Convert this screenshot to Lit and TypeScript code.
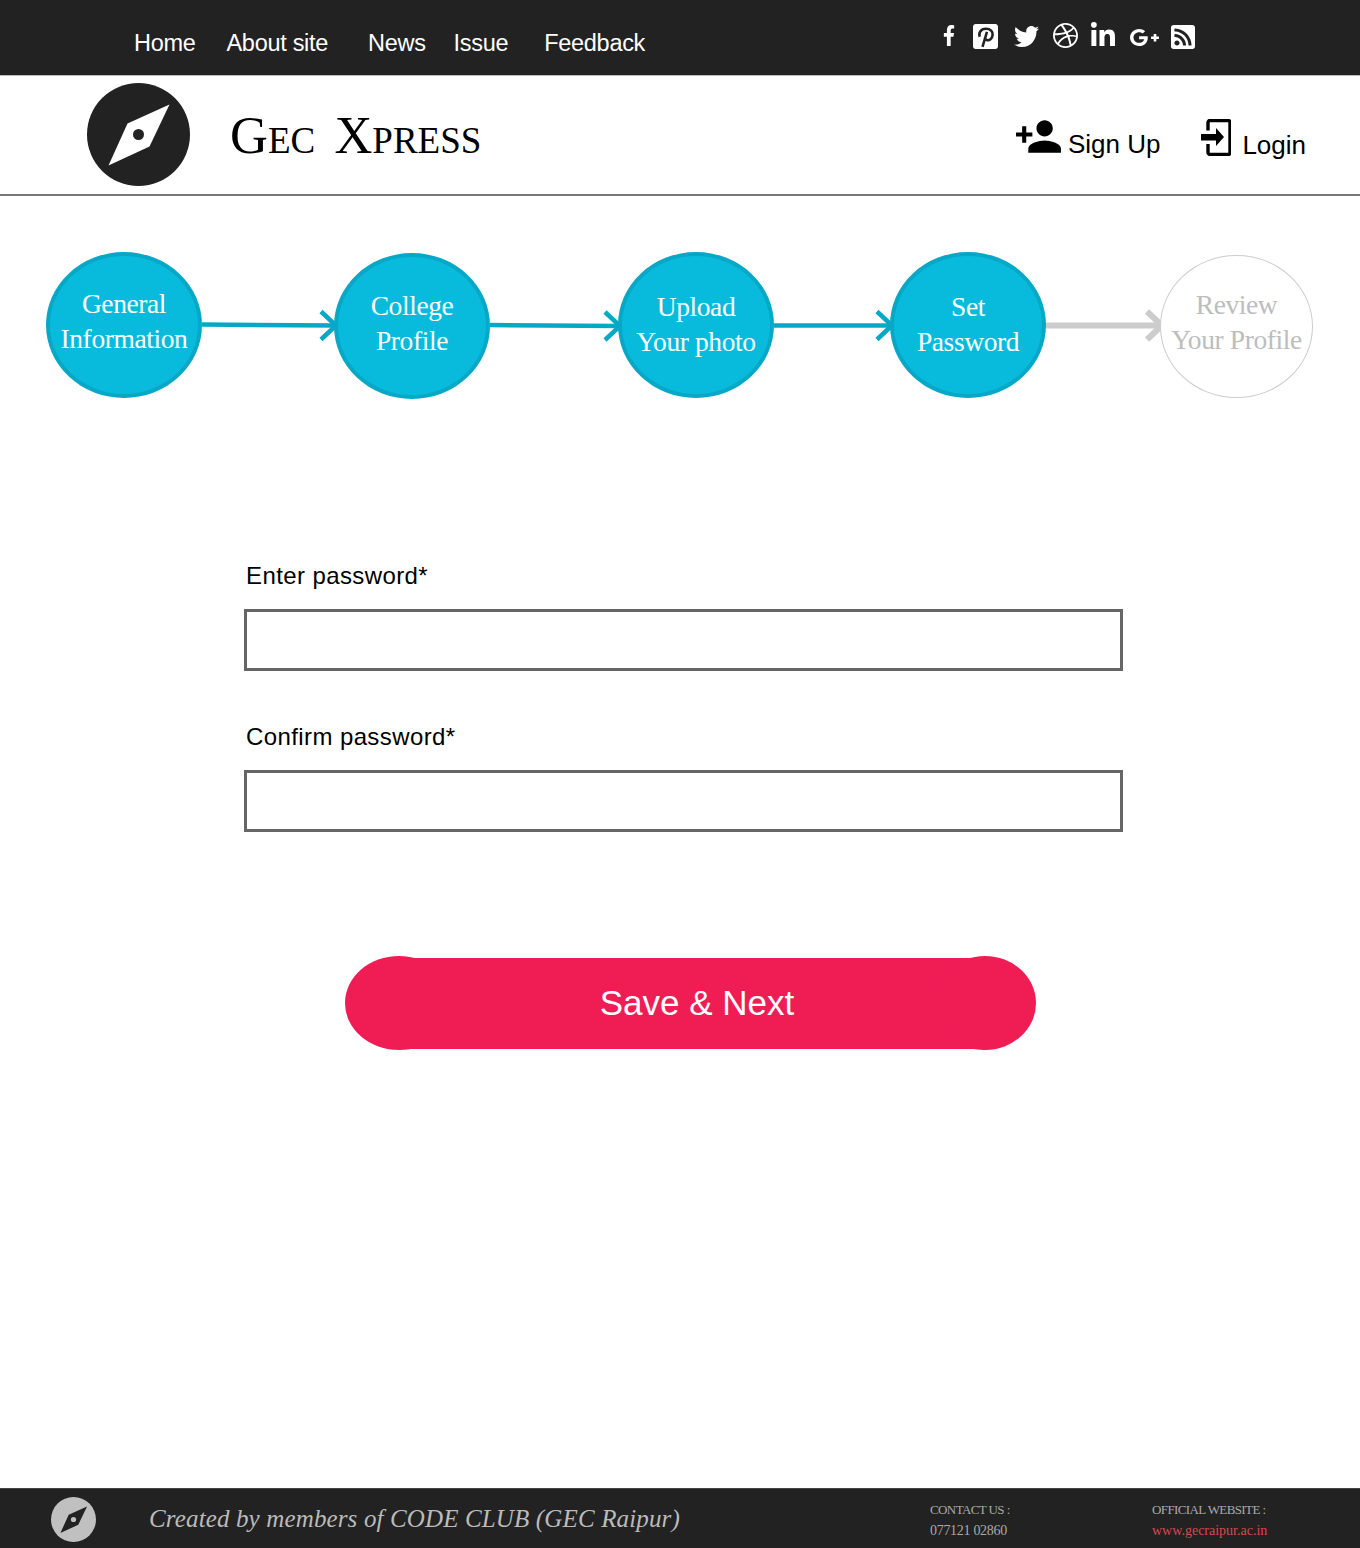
import { LitElement, html, css, svg } from "lit";
import { customElement } from "lit/decorators.js";

type Social = { c: string; vb: string; d: string; inner?: string };

const SOCIAL: Social[] = [
  { c: "f", vb: "0 0 320 512", d: "M279.14 288l14.22-92.66h-88.91v-60.13c0-25.35 12.42-50.06 52.24-50.06h40.42V6.26S260.43 0 225.36 0c-73.22 0-121.08 44.38-121.08 124.72v70.62H22.89V288h81.39v224h100.17V288z" },
  { c: "p", vb: "0 32 448 448", d: "M48 32h352c26.5 0 48 21.5 48 48v352c0 26.5-21.5 48-48 48H48c-26.5 0-48-21.500-48-48V80c0-26.500 21.500-48 48-48z", inner: "M122 262C95 195 135 118 232 118C315 118 358 170 352 228C346 295 292 336 245 318C222 309 212 292 218 270M250 175L170 440" },
  { c: "t", vb: "0 48 512 416", d: "M459.37 151.716c.325 4.548.325 9.097.325 13.645 0 138.72-105.583 298.558-298.558 298.558-59.452 0-114.68-17.219-161.137-47.106 8.447.974 16.568 1.299 25.34 1.299 49.055 0 94.213-16.568 130.274-44.832-46.132-.975-84.792-31.188-98.112-72.772 6.498.974 12.995 1.624 19.818 1.624 9.421 0 18.843-1.3 27.614-3.573-48.081-9.747-84.143-51.98-84.143-102.985v-1.299c13.969 7.797 30.214 12.67 47.431 13.319-28.264-18.843-46.781-51.005-46.781-87.391 0-19.492 5.197-37.36 14.294-52.954 51.655 63.675 129.3 105.258 216.365 109.807-1.624-7.797-2.599-15.918-2.599-24.04 0-57.828 46.782-104.934 104.934-104.934 30.213 0 57.502 12.67 76.67 33.137 23.715-4.548 46.456-13.32 66.599-25.34-7.798 24.366-24.366 44.833-46.132 57.827 21.117-2.273 41.584-8.122 60.426-16.243-14.292 20.791-32.161 39.308-52.628 54.253z" },
  { c: "d", vb: "8 8 496 496", d: "M256 8C119.252 8 8 119.252 8 256s111.252 248 248 248 248-111.252 248-248S392.748 8 256 8zm163.97 114.366c29.503 36.046 47.369 81.957 47.835 131.955-6.984-1.477-77.018-15.682-147.502-6.818-5.752-14.041-11.181-26.393-18.617-41.614 78.321-31.977 113.818-77.482 118.284-83.523zM396.421 97.87c-3.81 5.427-35.697 48.286-111.021 76.519-34.712-63.776-73.185-116.168-79.04-124.008 67.176-16.193 137.966 1.27 190.061 47.489zm-230.48-33.25c5.585 7.659 43.438 60.116 78.537 122.509-99.087 26.313-186.36 25.934-195.834 25.809C62.38 147.205 106.678 92.573 165.941 64.62zM44.17 256.323c0-2.166.043-4.322.108-6.473 9.268.19 111.92 1.513 217.706-30.146 6.064 11.868 11.857 23.915 17.174 35.949-76.599 21.575-146.194 83.527-180.531 142.306C64.794 360.405 44.17 310.73 44.17 256.323zm81.807 167.113c22.127-45.233 82.178-103.622 167.579-132.756 29.74 77.283 42.039 142.053 45.189 160.638-68.112 29.013-150.015 21.053-212.768-27.882zm248.38 8.489c-2.171-12.886-13.446-74.897-41.152-151.033 66.38-10.626 124.7 6.768 131.947 9.055-9.442 58.941-43.273 109.844-90.795 141.978z" },
  { c: "l", vb: "0 0 448 448", d: "M100.28 448H7.4V148.9h92.88zM53.79 108.1C24.09 108.1 0 83.5 0 53.8a53.79 53.79 0 0 1 107.58 0c0 29.7-24.1 54.3-53.79 54.3zM447.9 448h-92.68V302.4c0-34.7-.7-79.2-48.29-79.2-48.29 0-55.69 37.7-55.69 76.7V448h-92.78V148.9h89.08v40.8h1.3c12.4-23.5 42.69-48.3 87.88-48.3 94 0 111.28 61.9 111.28 142.3V448z" },
  { c: "g", vb: "12 64 616 384", d: "M386.061 228.496c1.834 9.692 3.143 19.384 3.143 31.956C389.204 370.205 315.599 448 204.8 448c-106.084 0-192-85.915-192-192s85.916-192 192-192c51.864 0 95.083 18.859 128.611 50.292l-52.126 50.03c-14.145-13.621-39.028-29.599-76.485-29.599-65.484 0-118.92 54.221-118.92 121.277 0 67.056 53.436 121.277 118.92 121.277 75.961 0 104.513-54.745 108.965-82.773H204.8v-66.009h181.261zm185.406 6.437V179.2h-56.001v55.733h-55.733v56.001h55.733v55.733h56.001v-55.733H627.2v-56.001h-55.733z" },
  { c: "r", vb: "0 32 448 448", d: "M400 32H48C21.49 32 0 53.49 0 80v352c0 26.51 21.49 48 48 48h352c26.51 0 48-21.49 48-48V80c0-26.51-21.49-48-48-48zM112 416c-26.51 0-48-21.49-48-48s21.49-48 48-48 48 21.49 48 48-21.49 48-48 48zm157.533 0h-34.335c-6.011 0-11.051-4.636-11.442-10.634-5.214-80.05-69.243-143.92-149.123-149.123-5.997-.39-10.633-5.431-10.633-11.441v-34.335c0-6.535 5.468-11.777 11.994-11.425 110.546 5.974 198.997 94.536 204.964 204.964.352 6.526-4.89 11.994-11.425 11.994zm103.027 0h-34.334c-6.161 0-11.175-4.882-11.427-11.038-5.598-136.535-115.204-246.161-251.76-251.76C68.882 152.949 64 147.935 64 141.774V107.44c0-6.454 5.338-11.664 11.787-11.432 167.83 6.025 302.21 141.191 308.205 308.205.232 6.449-4.978 11.787-11.432 11.787z" },
];

const STEPS = [
  { a: "General", b: "Information", cls: "s1" },
  { a: "College", b: "Profile", cls: "s2" },
  { a: "Upload", b: "Your photo", cls: "s3" },
  { a: "Set", b: "Password", cls: "s3" },
  { a: "Review", b: "Your Profile", cls: "off" },
];
const ARROWS = [
  { w: 132, y1: 72.5, y2: 73.5, off: false },
  { w: 128, y1: 73, y2: 74, off: false },
  { w: 116, y1: 73.5, y2: 73.5, off: false },
  { w: 114, y1: 73.5, y2: 73.5, off: true },
];

const compass = svg`<path d="M31 -30 L11 12 L-30 31 L-11 -11 Z" />`;

@customElement("app-root")
export class AppRoot extends LitElement {
  static styles = css`
    :host { display: flex; flex-direction: column; min-height: 1548px; background: #fff; font-family: "Liberation Sans", Arial, sans-serif; color: #000; }
    .top { height: 75px; background: #222; border-bottom: 1px solid #bbb; display: flex; }
    .nav { display: flex; padding: 29px 0 0 134px; color: #fff; font-size: 23.5px; letter-spacing: -0.3px; line-height: 28px; }
    .nav span:nth-child(1) { margin-right: 31px; }
    .nav span:nth-child(2) { margin-right: 40px; }
    .nav span:nth-child(3) { margin-right: 28px; }
    .nav span:nth-child(4) { margin-right: 36px; }
    .social { margin-left: auto; display: flex; align-items: flex-start; padding-right: 165px; }
    .social svg { fill: #fff; display: block; }
    .inner { fill: none; stroke: #222; stroke-width: 46; }
    .f { width: 12px; height: 21px; margin: 25px 18px 0 0; }
    .p { width: 25px; height: 25px; margin: 24px 16px 0 0; }
    .t { width: 25px; height: 21px; margin: 26px 14px 0 0; }
    .d { width: 25px; height: 25px; margin: 23px 13px 0 0; }
    .l { width: 24px; height: 24px; margin: 22px 15px 0 0; }
    .g { width: 29px; height: 17px; margin: 29px 12px 0 0; }
    .r { width: 24px; height: 24px; margin: 25px 0 0 0; }

    .brand { height: 118px; border-bottom: 2px solid #777; display: flex; align-items: flex-start; }
    .logo { width: 103px; height: 103px; margin: 7px 0 0 87px; display: block; flex: none; }
    .title { margin: 26px 0 0 40px; font-family: "Liberation Serif", serif; font-variant: small-caps; font-size: 52.5px; line-height: 66px; white-space: pre; word-spacing: -3.5px; }
    .acts { margin-left: auto; display: flex; font-size: 26px; line-height: 30px; padding-right: 54px; }
    .act { display: flex; align-items: flex-start; }
    .act span { margin-top: 53px; }
    .signup { margin-right: 41px; }
    .ic-add { width: 49px; height: 49px; margin: 36px 5px 0 0; display: block; }
    .ic-log { width: 30px; height: 37px; margin: 43px 11px 0 0; display: block; }
    .login span { margin-top: 54px; }

    .steps { display: flex; align-items: flex-start; padding: 56px 0 0 46px; }
    .step { width: 156px; height: 146px; flex: none; border: 4px solid #06a8c6; background: #08bbdd; border-radius: 50%; box-sizing: border-box; color: #fff; font-family: "Liberation Serif", serif; font-size: 27.5px; line-height: 35px; text-align: center; display: flex; flex-direction: column; justify-content: center; letter-spacing: -0.4px; }
    .step.s1 { padding-bottom: 9px; }
    .step.s2 { margin-top: 1px; padding-bottom: 7px; }
    .step.s3 { padding-bottom: 3px; }
    .step.off { width: 153px; height: 143px; margin-top: 3px; background: #fff; border: 1px solid #ccc; color: #bdbdbd; padding-bottom: 9px; }
    .arrow { display: block; flex: none; height: 146px; overflow: visible; fill: none; stroke: #06a8c6; stroke-width: 4.5; }
    .arrow.off { stroke: #ccc; stroke-width: 6; }

    .form { margin: 0; padding: 162px 0 0 244px; display: flex; flex-direction: column; width: 879px; }
    .form label { font-size: 24px; line-height: 30px; padding-left: 2px; margin-bottom: 18px; letter-spacing: 0.4px; }
    .form input { box-sizing: border-box; width: 879px; height: 62px; border: 3px solid #666; background: #fff; margin: 0 0 51px; padding: 0; outline: none; }
    .save { position: relative; align-self: flex-start; margin: 75px 0 0 156px; width: 581px; height: 91px; background: #f01d55; border: none; color: #fff; font: 35px/87px "Liberation Sans", Arial, sans-serif; padding: 0 0 2px 13px; }
    .save::before, .save::after { content: ""; position: absolute; top: -2px; height: 94px; background: #f01d55; border-radius: 50%; }
    .save::before { left: -55px; width: 108px; }
    .save::after { right: -55px; width: 102px; }
    .save span { position: relative; z-index: 1; }

    .foot { margin-top: auto; height: 60px; background: #222; display: flex; align-items: flex-start; box-shadow: inset 0 1px 0 #444; }
    .flogo { width: 45px; height: 45px; margin: 9px 0 0 51px; flex: none; display: block; }
    .credit { margin: 15px 0 0 53px; width: 781px; flex: none; color: #bbb; font-family: "Liberation Serif", serif; font-style: italic; font-size: 25px; line-height: 32px; letter-spacing: 0.14px; white-space: nowrap; }
    .info { font-family: "Liberation Serif", serif; font-size: 14px; line-height: 21px; color: #aaa; padding-top: 11px; letter-spacing: -0.3px; }
    .info.one { width: 222px; flex: none; }
    .head { font-size: 13px; letter-spacing: -0.6px; }
    .link { color: #d9474f; letter-spacing: 0; }
  `;

  render() {
    return html`
      <div class="top">
        <nav class="nav"><span>Home</span><span>About site</span><span>News</span><span>Issue</span><span>Feedback</span></nav>
        <div class="social">
          ${SOCIAL.map((s) => html`<svg class=${s.c} viewBox=${s.vb} preserveAspectRatio="none"><path d=${s.d}></path>${s.inner ? svg`<path class="inner" d=${s.inner}></path>` : ""}</svg>`)}
        </div>
      </div>
      <div class="brand">
        <svg class="logo" viewBox="-51.5 -51.5 103 103"><circle r="51.5" fill="#222"></circle><g fill="#fff">${compass}</g><circle r="5.5" fill="#222"></circle></svg>
        <div class="title">Gec  Xpress</div>
        <div class="acts">
          <div class="act signup">
            <svg class="ic-add" viewBox="0 0 24 24"><path d="M15 12c2.21 0 4-1.79 4-4s-1.79-4-4-4-4 1.79-4 4 1.79 4 4 4zm-9-2V7H4v3H1v2h3v3h2v-3h3v-2H6zm9 4c-2.67 0-8 1.34-8 4v2h16v-2c0-2.66-5.33-4-8-4z"></path></svg>
            <span>Sign Up</span>
          </div>
          <div class="act login">
            <svg class="ic-log" viewBox="0 0 30 37"><path d="M7 11.5V3.500C7 2.400 7.900 1.500 9 1.500h18c1.100 0 2 .9 2 2v30c0 1.100-.9 2-2 2H9c-1.100 0-2-.9-2-2V25" fill="none" stroke="#000" stroke-width="3.400"></path><path d="M0 15h15V9l8 9-8 9v-5.500H0z"></path></svg>
            <span>Login</span>
          </div>
        </div>
      </div>
      <div class="steps">
        ${STEPS.map((s, i) => html`
          <div class="step ${s.cls}"><div>${s.a}</div><div>${s.b}</div></div>
          ${ARROWS[i] ? this.arrow(ARROWS[i]) : ""}
        `)}
      </div>
      <form class="form">
        <label>Enter password*</label>
        <input type="password" />
        <label>Confirm password*</label>
        <input type="password" />
        <button class="save" type="button"><span>Save &amp; Next</span></button>
      </form>
      <footer class="foot">
        <svg class="flogo" viewBox="-51.500 -51.500 103 103"><circle r="51.500" fill="#c0c0c0"></circle><g fill="#222">${compass}</g><circle r="6" fill="#c0c0c0"></circle></svg>
        <div class="credit">Created by members of CODE CLUB (GEC Raipur)</div>
        <div class="info one"><div class="head">CONTACT US :</div><div>077121 02860</div></div>
        <div class="info two"><div class="head">OFFICIAL WEBSITE :</div><div class="link">www.gecraipur.ac.in</div></div>
      </footer>
    `;
  }

  arrow(a: { w: number; y1: number; y2: number; off: boolean }) {
    const tip = a.w + 2;
    return html`<svg class="arrow ${a.off ? "off" : ""}" style="width:${a.w}px" viewBox="0 0 ${a.w} 146">
      <path d="M0 ${a.y1} L${tip} ${a.y2}"></path>
      <path d="M${tip - 15} ${a.y2 - 14} L${tip} ${a.y2} L${tip - 15} ${a.y2 + 14}"></path>
    </svg>`;
  }
}
